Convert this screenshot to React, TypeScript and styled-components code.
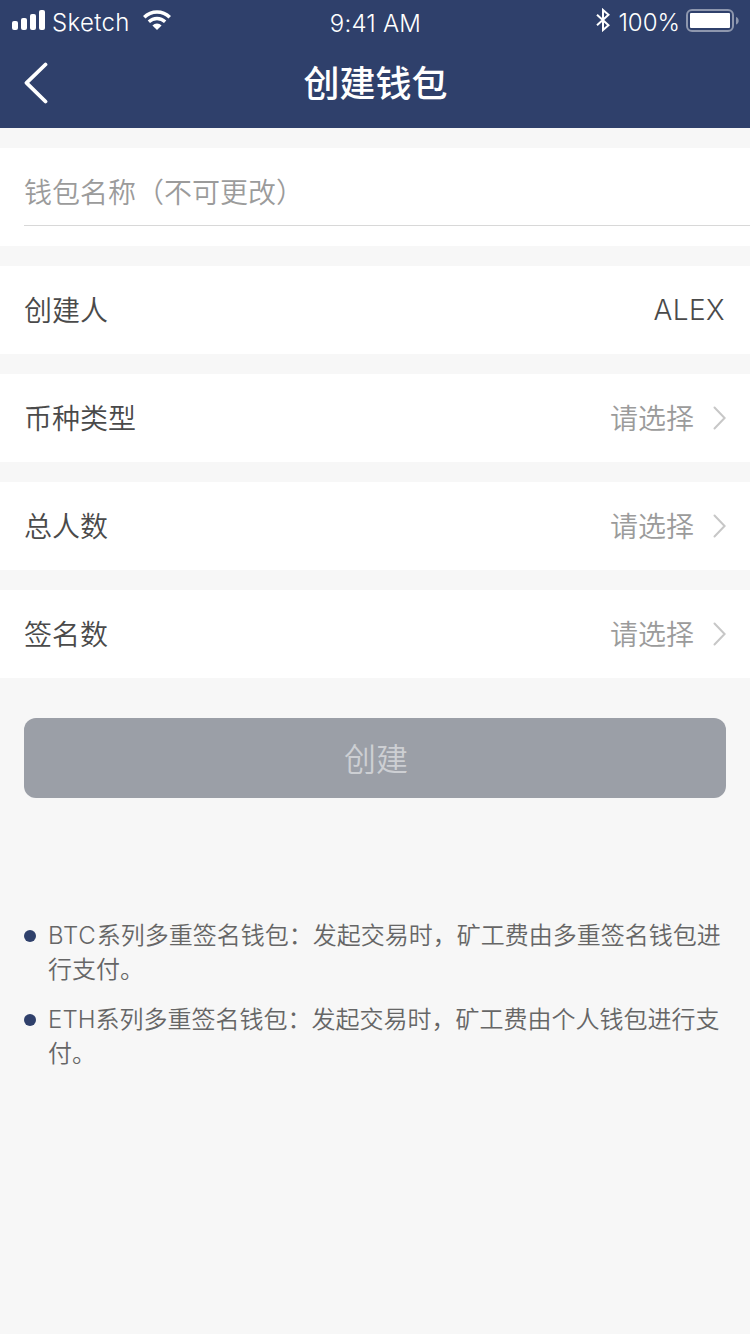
import React from "react";
import styled, { createGlobalStyle } from "styled-components";

const GlobalStyle = createGlobalStyle`
  * { box-sizing: border-box; }
  body {
    margin: 0;
    background: #f7f7f7;
    font-family: Inter, "Noto Sans CJK SC", sans-serif;
    font-weight: 350;
  }
`;

const Screen = styled.div`
  width: 750px;
  min-height: 1334px;
  background: #f7f7f7;
  display: flex;
  flex-direction: column;
`;

const Header = styled.header`
  height: 128px;
  background: #2f406b;
  color: #fff;
`;

const StatusBar = styled.div`
  height: 40px;
  display: grid;
  grid-template-columns: 1fr auto 1fr;
  padding: 0 11px 0 12px;
`;

const StatusGroup = styled.div<{ $end?: boolean }>`
  display: flex;
  align-items: flex-start;
  justify-content: ${(p) => (p.$end ? "flex-end" : "flex-start")};
`;

const StatusText = styled.span<{ $spacing?: number; $top?: number; $left?: number }>`
  font-size: 24px;
  line-height: 28px;
  white-space: nowrap;
  letter-spacing: ${(p) => p.$spacing ?? 0}px;
  padding: ${(p) => p.$top ?? 9}px 0 0 ${(p) => p.$left ?? 0}px;
`;

const StatusIcon = styled.svg<{ $top: number; $left?: number; $right?: number }>`
  display: block;
  flex: none;
  margin: ${(p) => `${p.$top}px ${p.$right ?? 0}px 0 ${p.$left ?? 0}px`};
`;

const NavBar = styled.nav`
  height: 88px;
  display: grid;
  grid-template-columns: 96px 1fr 96px;
  align-items: center;
`;

const BackButton = styled.button`
  height: 88px;
  padding: 0 0 2px 24px;
  border: 0;
  background: none;
  color: inherit;
  display: flex;
  align-items: center;
`;

const Title = styled.h1`
  margin: 0;
  padding-left: 1px;
  text-align: center;
  font-size: 36px;
  line-height: 50px;
  font-weight: 500;
`;

const Form = styled.main`
  display: flex;
  flex-direction: column;
  gap: 20px;
  padding-top: 20px;
`;

const NameField = styled.div`
  height: 98px;
  background: #fff;
  padding-left: 24px;
`;

const NameInput = styled.div`
  height: 78px;
  border-bottom: 1px solid #d8d8d8;
  color: #9b9b9b;
  font-size: 28px;
  line-height: 90px;
`;

const Row = styled.div`
  height: 88px;
  background: #fff;
  padding: 0 24px;
  display: flex;
  align-items: center;
  justify-content: space-between;
  font-size: 28px;
  line-height: 40px;
  color: #4a4a4a;
`;

const RowText = styled.span`
  padding-top: 2px;
`;

const PersonName = styled.span`
  padding-right: 1px;
  font-weight: 300;
  letter-spacing: 0.4px;
`;

const Picker = styled.span`
  display: flex;
  align-items: center;
  gap: 18px;
  color: #9b9b9b;
`;

const SubmitButton = styled.button`
  height: 80px;
  margin: 40px 24px 0;
  padding: 0 0 2px 2px;
  border: 0;
  border-radius: 12px;
  background: #9b9fa7;
  color: #cdcfd3;
  font: inherit;
  font-size: 32px;
`;

const Notes = styled.ul`
  margin: 120px 24px 0;
  padding: 0;
  list-style: none;
  display: flex;
  flex-direction: column;
  gap: 15px;
`;

const Note = styled.li`
  display: flex;
  gap: 12px;
  font-size: 24px;
  line-height: 34px;
  color: #666;

  &::before {
    content: "";
    flex: none;
    width: 12px;
    height: 12px;
    margin-top: 12px;
    border-radius: 50%;
    background: #2f406b;
  }
`;

const NoteText = styled.span`
  padding-top: 1px;
`;

const Coin = styled.span<{ $spacing: number }>`
  font-weight: 300;
  letter-spacing: ${(p) => p.$spacing}px;
`;

const SignalIcon = () => (
  <StatusIcon $top={10} width="33" height="20" fill="#fff">
    <rect x="0" y="11" width="6" height="9" rx="2" />
    <rect x="9" y="8" width="6" height="12" rx="2" />
    <rect x="18" y="4" width="6" height="16" rx="2" />
    <rect x="27" y="0" width="6" height="20" rx="2" />
  </StatusIcon>
);

const WifiIcon = () => (
  <StatusIcon $top={10} $left={13} width="28" height="20" viewBox="0 0 28 20" fill="#fff">
    <path d="M0 5.900a20 20 0 0 1 28 0l-2.500 2.500a16.400 16.400 0 0 0-23 0z" />
    <path d="M4.700 10.600a13.300 13.300 0 0 1 18.600 0l-2.300 2.400a10 10 0 0 0-14 0z" />
    <path d="M14 20l-4.600-4.600a6.400 6.400 0 0 1 9.200 0z" />
  </StatusIcon>
);

const BluetoothIcon = () => (
  <StatusIcon $top={8} $right={8} width="14" height="24" viewBox="0 0 14 24">
    <path
      d="M1 6.8l11.500 10.400L7 22V2l5.500 4.800L1 17.200"
      fill="none"
      stroke="#fff"
      strokeWidth="2"
    />
  </StatusIcon>
);

const BatteryIcon = () => (
  <StatusIcon $top={9} $left={6} width="53" height="23" viewBox="0 0 53 23">
    <rect x="1" y="1" width="46" height="21" rx="5" fill="none" stroke="#8e97ae" strokeWidth="2" />
    <rect x="4" y="4" width="40" height="15" rx="1" fill="#fff" />
    <path d="M50 8c3.600 1 3.600 6.500 0 7.500z" fill="#8e97ae" />
  </StatusIcon>
);

const BackIcon = () => (
  <svg width="24" height="42" viewBox="0 0 24 42" fill="none" stroke="#fff" strokeWidth="3.800" strokeLinecap="round" strokeLinejoin="round">
    <path d="M21.500 2.500L2.500 20.800l19 18.700" />
  </svg>
);

const ChevronIcon = () => (
  <svg width="14" height="26" viewBox="0 0 14 26" fill="none" stroke="#c7c7c7" strokeWidth="2" strokeLinecap="round">
    <path d="M2.500 2.500L12.600 13 2.500 23.500" />
  </svg>
);

const pickers = ["币种类型", "总人数", "签名数"];

const notes = [
  { coin: "BTC", spacing: 0.8, text: "系列多重签名钱包：发起交易时，矿工费由多重签名钱包进行支付。" },
  { coin: "ETH", spacing: 0.1, text: "系列多重签名钱包：发起交易时，矿工费由个人钱包进行支付。" },
];

export default function App() {
  return (
    <Screen lang="zh-CN">
      <GlobalStyle />
      <Header>
        <StatusBar>
          <StatusGroup>
            <SignalIcon />
            <StatusText $spacing={0.35} $left={7}>Sketch</StatusText>
            <WifiIcon />
          </StatusGroup>
          <StatusText $spacing={0.2} $top={10}>9:41 AM</StatusText>
          <StatusGroup $end>
            <BluetoothIcon />
            <StatusText>100%</StatusText>
            <BatteryIcon />
          </StatusGroup>
        </StatusBar>
        <NavBar>
          <BackButton aria-label="返回">
            <BackIcon />
          </BackButton>
          <Title>创建钱包</Title>
        </NavBar>
      </Header>
      <Form>
        <NameField>
          <NameInput>钱包名称（不可更改）</NameInput>
        </NameField>
        <Row>
          <RowText>创建人</RowText>
          <PersonName>ALEX</PersonName>
        </Row>
        {pickers.map((label) => (
          <Row key={label}>
            <RowText>{label}</RowText>
            <Picker>
              <RowText>请选择</RowText>
              <ChevronIcon />
            </Picker>
          </Row>
        ))}
      </Form>
      <SubmitButton>创建</SubmitButton>
      <Notes>
        {notes.map((note) => (
          <Note key={note.coin}>
            <NoteText>
              <Coin $spacing={note.spacing}>{note.coin}</Coin>
              {note.text}
            </NoteText>
          </Note>
        ))}
      </Notes>
    </Screen>
  );
}
